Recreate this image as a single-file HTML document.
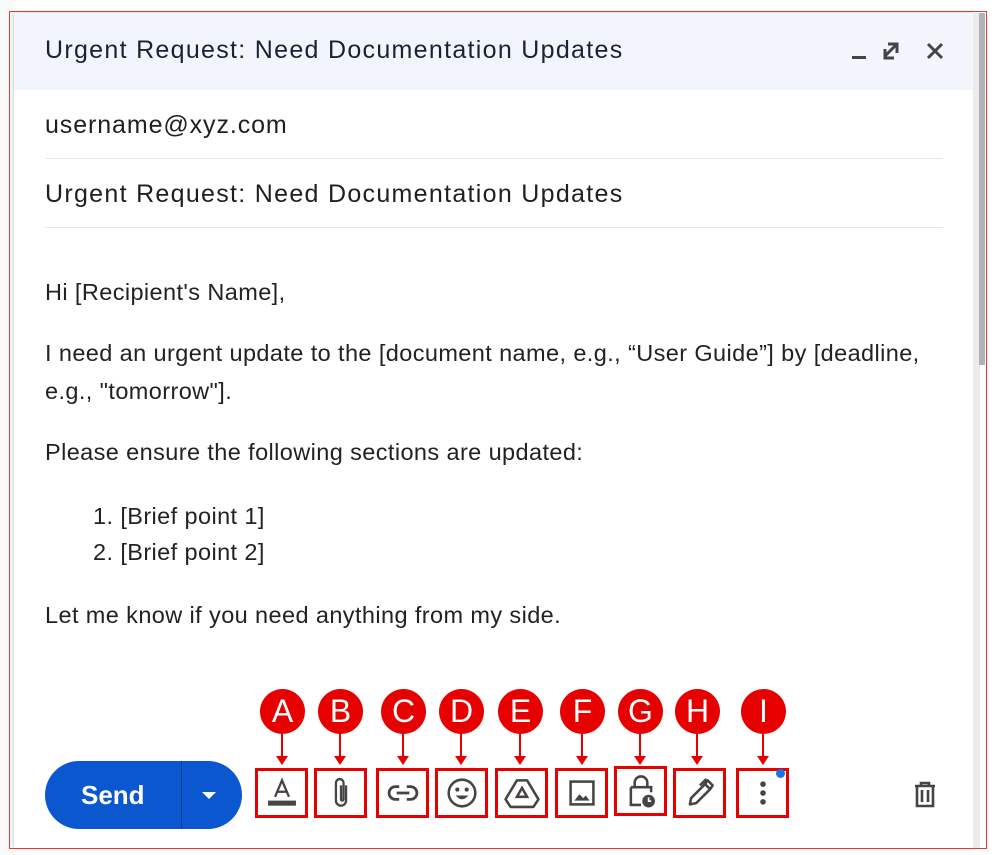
<!DOCTYPE html>
<html><head><meta charset="utf-8"><style>
*{margin:0;padding:0;box-sizing:border-box}
body{width:996px;height:855px;background:#fff;position:relative;overflow:hidden;font-family:"Liberation Sans",Arial,sans-serif}
.abs{position:absolute}
.frame{left:9px;top:11px;width:978px;height:838px;border:1.5px solid #e53935}
.win{left:14px;top:13px;width:959px;height:835px;background:#fff;box-shadow:0 0 4px rgba(0,0,0,.25)}
.hdr{left:14px;top:13px;width:959px;height:77px;background:#f2f6fc}
.t{color:#1f1f1f;font-size:25px;letter-spacing:1.3px;white-space:nowrap}
.line{height:1px;background:#e8e8e8;left:45px;width:898px}
.body{font-size:23.5px;color:#222;letter-spacing:0.4px;white-space:nowrap}
.box{border:3px solid #e60000;width:53px;height:50px;top:768px;display:flex;align-items:center;justify-content:center}
.circ{width:45px;height:45px;border-radius:50%;background:#e60000;color:#fff;font-size:32px;display:flex;align-items:center;justify-content:center;top:689px}
.arr{width:2px;background:#e60000;top:733px;height:28px}
.tri{width:0;height:0;border-left:6px solid transparent;border-right:6px solid transparent;border-top:9px solid #e60000;top:756px}
</style></head><body>
<div class="abs" style="left:0;top:0;width:14px;height:855px;background:#fafafa"></div>
<div class="abs win"></div>
<div class="abs hdr"></div>
<div class="abs" style="left:973px;top:13px;width:7px;height:835px;background:#ececec"></div>
<div class="abs" style="left:979px;top:13px;width:6px;height:352px;background:#b3b3b3"></div>
<div class="abs t" style="left:45px;top:36px;color:#1a2233">Urgent Request: Need Documentation Updates</div>
<svg class="abs" style="left:848px;top:38px" width="100" height="28" viewBox="0 0 100 28">
<rect x="4" y="18" width="14" height="3" fill="#444"/>
<path d="M40 6h9v9M49 6l-12 12M37 11v9h9" stroke="#444" stroke-width="3" fill="none"/>
<path d="M80 6l14 14M94 6l-14 14" stroke="#444" stroke-width="3"/>
</svg>
<div class="abs t" style="left:45px;top:111px;letter-spacing:0.9px">username@xyz.com</div>
<div class="abs line" style="top:158px"></div>
<div class="abs t" style="left:45px;top:180px">Urgent Request: Need Documentation Updates</div>
<div class="abs line" style="top:227px"></div>
<div class="abs body" style="left:45px;top:279px">Hi [Recipient's Name],</div>
<div class="abs body" style="left:45px;top:334px;line-height:38px">I need an urgent update to the [document name, e.g., “User Guide”] by [deadline,<br>e.g., "tomorrow"].</div>
<div class="abs body" style="left:45px;top:439px">Please ensure the following sections are updated:</div>
<div class="abs body" style="left:93px;top:498px;line-height:36px">1. [Brief point 1]<br>2. [Brief point 2]</div>
<div class="abs body" style="left:45px;top:602px">Let me know if you need anything from my side.</div>
<div class="abs" style="left:45px;top:761px;width:197px;height:68px;border-radius:34px;background:#0b57d0"></div>
<div class="abs" style="left:181px;top:761px;width:1px;height:68px;background:#0a3a8a"></div>
<div class="abs" style="left:81px;top:780px;color:#fff;font-size:26px;font-weight:bold">Send</div>
<div class="abs" style="left:202px;top:792px;border-left:7px solid transparent;border-right:7px solid transparent;border-top:7px solid #fff"></div>
<svg class="abs" style="left:910px;top:780px" width="30" height="30" viewBox="0 0 30 30"><path d="M5 6h20M11 6V3h8v3M7 6v20h16V6M12 10v12M18 10v12" stroke="#444" stroke-width="2.6" fill="none"/></svg>
<div class="abs circ" style="left:260px">A</div><div class="abs arr" style="left:281px"></div><div class="abs tri" style="left:276px"></div>
<div class="abs circ" style="left:318px">B</div><div class="abs arr" style="left:339px"></div><div class="abs tri" style="left:334px"></div>
<div class="abs circ" style="left:381px">C</div><div class="abs arr" style="left:402px"></div><div class="abs tri" style="left:397px"></div>
<div class="abs circ" style="left:439px">D</div><div class="abs arr" style="left:460px"></div><div class="abs tri" style="left:455px"></div>
<div class="abs circ" style="left:498px">E</div><div class="abs arr" style="left:519px"></div><div class="abs tri" style="left:514px"></div>
<div class="abs circ" style="left:560px">F</div><div class="abs arr" style="left:581px"></div><div class="abs tri" style="left:576px"></div>
<div class="abs circ" style="left:618px">G</div><div class="abs arr" style="left:639px"></div><div class="abs tri" style="left:634px"></div>
<div class="abs circ" style="left:675px">H</div><div class="abs arr" style="left:696px"></div><div class="abs tri" style="left:691px"></div>
<div class="abs circ" style="left:741px">I</div><div class="abs arr" style="left:762px"></div><div class="abs tri" style="left:757px"></div>
<div class="abs box" style="left:255px"><svg width="38" height="38" viewBox="0 0 30 30"><path d="M9.5 18l5.5-13 5.5 13M11.3 14h7.4" stroke="#444" stroke-width="1.8" fill="none"/><rect x="4" y="21" width="22" height="4" fill="#444"/></svg></div>
<div class="abs box" style="left:314px"><svg width="38" height="38" viewBox="0 0 30 30"><path d="M19 9v12a4 4 0 0 1-8 0V7a3 3 0 0 1 6 0v13a1 1 0 0 1-2 0V9" stroke="#444" stroke-width="1.8" fill="none"/></svg></div>
<div class="abs box" style="left:376px"><svg width="38" height="38" viewBox="0 0 30 30"><path d="M12 10H9a5 5 0 0 0 0 10h3M18 10h3a5 5 0 0 1 0 10h-3M10 15h10" stroke="#444" stroke-width="2.2" fill="none"/></svg></div>
<div class="abs box" style="left:435px"><svg width="38" height="38" viewBox="0 0 30 30"><circle cx="15" cy="15" r="10.5" stroke="#444" stroke-width="2" fill="none"/><circle cx="11.3" cy="12.3" r="1.6" fill="#444"/><circle cx="18.7" cy="12.3" r="1.6" fill="#444"/><path d="M10 17q5 6 10 0z" fill="#444"/></svg></div>
<div class="abs box" style="left:495px"><svg width="38" height="38" viewBox="0 0 30 30"><path d="M11 5h8l9 15-4 6H6l-4-6z" stroke="#444" stroke-width="2" fill="none" stroke-linejoin="round"/><path d="M15 11l4 7h-8z" stroke="#444" stroke-width="2" fill="none"/></svg></div>
<div class="abs box" style="left:555px"><svg width="38" height="38" viewBox="0 0 30 30"><rect x="6" y="6" width="18" height="18" stroke="#444" stroke-width="2" fill="none"/><path d="M9 21l4-5 3 3 2-2 3 4z" fill="#444"/></svg></div>
<div class="abs box" style="left:614px;top:766px"><svg width="38" height="38" viewBox="0 0 30 30"><path d="M10 12V8.5a5 5 0 0 1 10 0V12M7 12h16v4M7 12v14h8" stroke="#444" stroke-width="2" fill="none"/><circle cx="21" cy="23" r="5" fill="#444"/><path d="M21 20v3h2" stroke="#fff" stroke-width="1.3" fill="none"/></svg></div>
<div class="abs box" style="left:673px"><svg width="38" height="38" viewBox="0 0 30 30"><path d="M7 24l1-5 11-11 4 4-11 11zM19 8l2-3 4 4-2 3M15 9l5-5" stroke="#444" stroke-width="2" fill="none" stroke-linejoin="round"/></svg></div>
<div class="abs box" style="left:736px"><svg width="38" height="38" viewBox="0 0 30 30"><circle cx="15" cy="8" r="2.2" fill="#444"/><circle cx="15" cy="15" r="2.2" fill="#444"/><circle cx="15" cy="22" r="2.2" fill="#444"/></svg></div>
<div class="abs" style="left:776px;top:769px;width:9px;height:9px;border-radius:50%;background:#1a73e8"></div>
<div class="abs frame"></div>
</body></html>
